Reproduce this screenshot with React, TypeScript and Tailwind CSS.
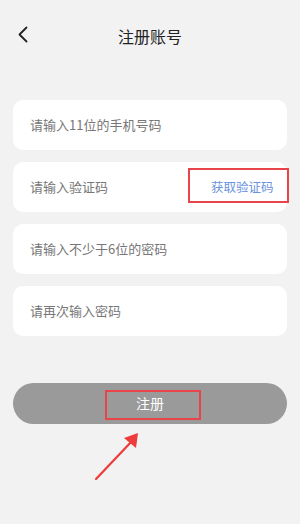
import React from 'react';

const font = { fontFamily: '"Noto Sans CJK SC", "Noto Sans", sans-serif' };

const fields = [
  '请输入11位的手机号码',
  '请输入验证码',
  '请输入不少于6位的密码',
  '请再次输入密码',
];

const App = () => {
  return (
    <div
      className="relative min-h-[524px] w-full bg-[#f2f2f2] px-[13px]"
      style={font}
    >
      {/* header */}
      <div className="relative flex h-[72px] items-center justify-center">
        <svg
          className="absolute left-[4px] top-[26px]"
          width="12"
          height="17"
          viewBox="0 0 12 17"
          fill="none"
        >
          <path
            d="M9.5 1.5 L2.5 8.5 L9.5 15.5"
            stroke="#222"
            strokeWidth="1.8"
            strokeLinecap="round"
            strokeLinejoin="round"
          />
        </svg>
        <span className="text-[16px] text-[#222]">注册账号</span>
      </div>

      {/* form */}
      <div className="mt-[28px] flex flex-col gap-[12px]">
        {fields.map((f, i) => (
          <div
            key={f}
            className="relative flex h-[50px] items-center rounded-[10px] bg-white pl-[17px]"
          >
            <span className="text-[13px] text-[#777]">{f}</span>
            {i === 1 && (
              <>
                <span className="absolute left-[198px] text-[12.5px] text-[#6a93dd]">
                  获取验证码
                </span>
                <div className="absolute left-[175px] top-[6px] h-[35px] w-[101px] border-2 border-[#e8454a]" />
              </>
            )}
          </div>
        ))}
      </div>

      {/* submit */}
      <div className="relative mt-[47px] flex h-[41px] items-center justify-center rounded-full bg-[#9a9a9a]">
        <span className="text-[14px] text-white">注册</span>
        <div className="absolute left-[92px] top-[7px] h-[30px] w-[96px] border-2 border-[#e8454a]" />
      </div>

      {/* annotation arrow */}
      <svg
        className="absolute left-[90px] top-[426px]"
        width="56"
        height="58"
        viewBox="0 0 56 58"
      >
        <path d="M6 53 L43 14" stroke="#ee3b3b" strokeWidth="2.2" strokeLinecap="round" />
        <polygon points="48,7 46,22 34,12" fill="#ee3b3b" />
      </svg>
    </div>
  );
};

export default App;
